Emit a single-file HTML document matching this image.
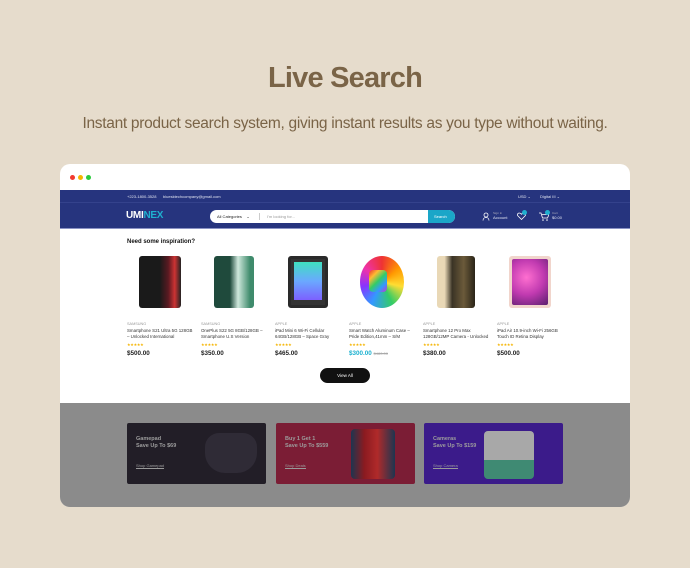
<!DOCTYPE html>
<html><head><meta charset="utf-8"><style>
*{margin:0;padding:0;box-sizing:border-box}
body{width:690px;height:568px;background:#e6dccc;font-family:"Liberation Sans",sans-serif;position:relative;overflow:hidden}
.abs{position:absolute}
h1{position:absolute;left:0;width:690px;top:62px;text-align:center;font-size:29px;font-weight:700;color:#7a6447;letter-spacing:-0.8px}
.sub{position:absolute;left:0;width:690px;top:115px;text-align:center;font-size:15.5px;color:#7a6447;letter-spacing:-0.3px}
.win{position:absolute;left:60px;top:164px;width:570px;height:343px;background:#fff;border-radius:10px;overflow:hidden}
.dot{position:absolute;top:11px;width:5px;height:5px;border-radius:50%}
.top{position:absolute;left:0;top:26px;width:570px;height:13px;background:#26347e;border-bottom:1px solid #34428c}
.hdr{position:absolute;left:0;top:39px;width:570px;height:26px;background:#26347e;border-bottom:1px solid #8a92c4}
.t{position:absolute;font-size:4px;color:#dfe2f0;white-space:nowrap}
.prod{position:absolute;top:92px;width:66px}
.img{position:absolute;left:12px;top:0;width:42px;height:52px;border-radius:3px}
.br{position:absolute;top:66px;font-size:3.8px;color:#999}
.nm{position:absolute;top:72px;font-size:4.4px;color:#333;line-height:6px;width:68px}
.st{position:absolute;top:86px;font-size:4px;color:#f5b400;letter-spacing:-0.3px}
.pr{position:absolute;top:94px;font-size:6.3px;font-weight:700;color:#222}
.ov{position:absolute;left:0;top:239px;width:570px;height:104px;background:#8b8b8b}
.bn{position:absolute;top:20px;width:139px;height:61px;border-radius:2px}
.bt{position:absolute;left:9px;top:13px;font-size:5.5px;font-weight:700;color:#9d9d9d;line-height:7px}
.bl{position:absolute;left:9px;top:40px;font-size:4px;color:#9d9d9d;border-bottom:1px solid #999}
</style></head><body>
<h1>Live Search</h1>
<div class="sub">Instant product search system, giving instant results as you type without waiting.</div>
<div class="win">
<div class="dot" style="left:10px;background:#f23a2f"></div>
<div class="dot" style="left:18px;background:#f5b500"></div>
<div class="dot" style="left:26px;background:#2ccb3e"></div>
<div class="top">
<div class="t" style="left:67px;top:4px">+223-1800-3528</div>
<div class="t" style="left:103px;top:4px">bluesktechcompany@gmail.com</div>
<div class="t" style="left:458px;top:4px">USD ⌄</div>
<div class="t" style="left:480px;top:4px">Digital III ⌄</div>
</div>
<div class="hdr">
<div class="abs" style="left:66px;top:7px;font-size:10px;font-weight:700;color:#fff;letter-spacing:-0.3px">UMI<span style="color:#1fb0cf">NEX</span></div>
<div class="abs" style="left:150px;top:7px;width:245px;height:13px;background:#fff;border-radius:7px"></div>
<div class="t" style="left:157px;top:11px;color:#222">All Categories &nbsp;&nbsp;&nbsp;⌄</div>
<div class="abs" style="left:199px;top:10px;width:1px;height:7px;background:#ccc"></div>
<div class="t" style="left:207px;top:11px;color:#999">I'm looking for...</div>
<div class="abs" style="left:368px;top:7px;width:27px;height:13px;background:#1aa6c8;border-radius:0 7px 7px 0"></div>
<div class="t" style="left:374px;top:11px;color:#fff">Search</div>
<svg class="abs" style="left:422px;top:9px" width="8" height="9" viewBox="0 0 8 9"><circle cx="4" cy="3" r="2" fill="none" stroke="#fff" stroke-width=".8"/><path d="M1 8.5c0-2 1.5-3 3-3s3 1 3 3" fill="none" stroke="#fff" stroke-width=".8"/></svg>
<div class="t" style="left:433px;top:8px;font-size:3px;color:#aab">Sign in</div>
<div class="t" style="left:433px;top:12px">Account</div>
<svg class="abs" style="left:457px;top:9px" width="9" height="8" viewBox="0 0 9 8"><path d="M4.5 7.5L1 4C0 3 .5 1 2.3 1c1 0 1.7.7 2.2 1.3C5 1.7 5.7 1 6.7 1 8.5 1 9 3 8 4z" fill="none" stroke="#fff" stroke-width=".8"/></svg>
<div class="abs" style="left:462px;top:7px;width:5px;height:5px;border-radius:50%;background:#1fb0cf"></div>
<svg class="abs" style="left:479px;top:9px" width="10" height="9" viewBox="0 0 10 9"><path d="M0 1h2l1.5 5h5L10 2.5H3" fill="none" stroke="#fff" stroke-width=".8"/><circle cx="4" cy="8" r=".8" fill="#fff"/><circle cx="8" cy="8" r=".8" fill="#fff"/></svg>
<div class="abs" style="left:485px;top:7px;width:5px;height:5px;border-radius:50%;background:#1fb0cf"></div>
<div class="t" style="left:492px;top:8px;font-size:3px;color:#aab">Cart</div>
<div class="t" style="left:492px;top:12px">$0.00</div>
</div>
<div class="abs" style="left:67px;top:75px;font-size:6px;font-weight:700;color:#111">Need some inspiration?</div>

<div class="prod" style="left:67px"><div class="img" style="background:linear-gradient(90deg,#1a1a1a 50%,#5b1a22 70%,#c33 85%,#222)"></div><div class="br">SAMSUNG</div><div class="nm">Smartphone S21 Ultra 5G 128GB – Unlocked International</div><div class="st">★★★★★</div><div class="pr">$500.00</div></div>
<div class="prod" style="left:141px"><div class="img" style="left:13px;width:40px;background:linear-gradient(90deg,#1f4a3c 40%,#cfe8dc 60%,#3f8b6c 90%)"></div><div class="br">SAMSUNG</div><div class="nm">OnePlus S22 5G 8GB/128GB – Smartphone U.S Version</div><div class="st">★★★★★</div><div class="pr">$350.00</div></div>
<div class="prod" style="left:215px"><div class="img" style="left:13px;width:40px;background:#333;border:3px solid #2a2a2a"><div style="margin:3px;height:38px;background:linear-gradient(180deg,#3fe0c0,#6aa9ff,#7c60ff)"></div></div><div class="br">APPLE</div><div class="nm">iPad Mini 6 Wi-Fi Cellular 64GB/128GB – Space Gray</div><div class="st">★★★★★</div><div class="pr">$465.00</div></div>
<div class="prod" style="left:289px"><div class="img" style="left:11px;width:44px;border-radius:50%;background:conic-gradient(#e33,#f90,#fd3,#3c6,#39f,#83f,#e3a,#e33)"></div><div class="abs" style="left:20px;top:14px;width:18px;height:22px;border-radius:4px;background:linear-gradient(135deg,#e33,#fb3,#3c6,#39f,#c3c)"></div><div class="br">APPLE</div><div class="nm">Smart Watch Aluminum Case – Pride Edition,41mm – S/M</div><div class="st">★★★★★</div><div class="pr" style="color:#1ab0cf">$300.00 <span style="font-size:4px;color:#aaa;font-weight:400;text-decoration:line-through">$480.00</span></div></div>
<div class="prod" style="left:363px"><div class="img" style="left:14px;width:38px;background:linear-gradient(90deg,#e9d8b6 20%,#3a3325 40%,#6b5a3a 70%,#2a2418)"></div><div class="br">APPLE</div><div class="nm">Smartphone 12 Pro Max 128GB/12MP Camera - Unlocked</div><div class="st">★★★★★</div><div class="pr">$380.00</div></div>
<div class="prod" style="left:437px"><div class="img" style="background:#f1d5cc;padding:3px"><div style="height:46px;border-radius:2px;background:radial-gradient(circle at 40% 40%,#ff6fd0,#c03ab0 50%,#5a1f6e)"></div></div><div class="br">APPLE</div><div class="nm">iPad Air 10.9-inch Wi-Fi 256GB Touch ID Retina Display</div><div class="st">★★★★★</div><div class="pr">$500.00</div></div>

<div class="abs" style="left:260px;top:204px;width:50px;height:15px;border-radius:8px;background:#111;color:#fff;font-size:4.5px;text-align:center;line-height:15px">View All</div>

<div class="ov">
<div class="bn" style="left:67px;background:#221e27"><div class="bt">Gamepad<br>Save Up To $69</div><div class="bl">Shop Gamepad</div><div class="abs" style="left:78px;top:10px;width:52px;height:40px;border-radius:14px 14px 20px 20px;background:#2f2b36"></div></div>
<div class="bn" style="left:216px;background:#7b1d35"><div class="bt">Buy 1 Get 1<br>Save Up To $559</div><div class="bl">Shop Deals</div><div class="abs" style="left:75px;top:6px;width:44px;height:50px;border-radius:4px;background:linear-gradient(90deg,#1e3550,#8a1a20 30%,#b02a2a 60%,#1e3550)"></div></div>
<div class="bn" style="left:364px;background:#3b1b8a"><div class="bt">Cameras<br>Save Up To $159</div><div class="bl">Shop Camera</div><div class="abs" style="left:60px;top:8px;width:50px;height:48px;border-radius:4px;background:linear-gradient(180deg,#a8a8a8 60%,#3f8a73 60%)"></div></div>
</div>
</div>
</body></html>
